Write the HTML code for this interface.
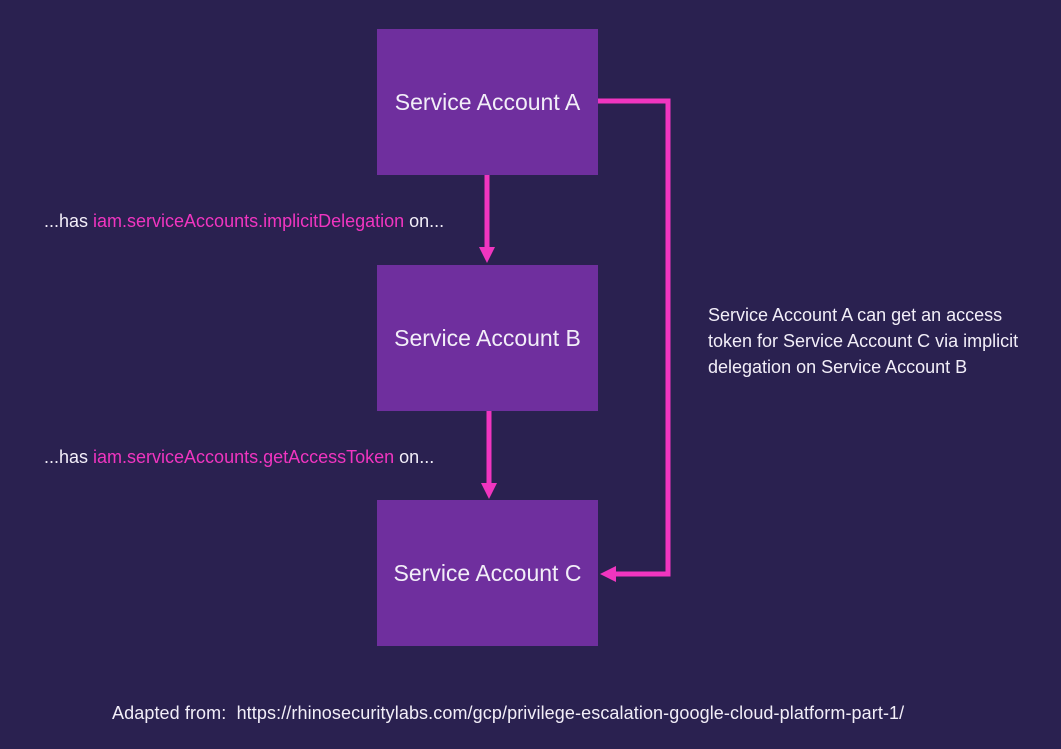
<!DOCTYPE html>
<html><head><style>
body{margin:0;width:1061px;height:749px;background:#2a2150;position:relative;overflow:hidden;font-family:"Liberation Sans",sans-serif;color:#f2eef8}
.box{position:absolute;left:377px;width:221px;height:146px;background:#6f2f9e;display:flex;align-items:center;justify-content:center;font-size:23px}
.t{position:absolute;font-size:18px;white-space:nowrap}
.p{color:#f035c0}
</style></head><body>
<div class="box" style="top:29px">Service Account A</div>
<div class="box" style="top:265px">Service Account B</div>
<div class="box" style="top:500px">Service Account C</div>
<svg width="1061" height="749" style="position:absolute;left:0;top:0">
<g fill="none" stroke="#f035c0" stroke-width="5">
<line x1="487" y1="175" x2="487" y2="248"/>
<line x1="489" y1="411" x2="489" y2="484"/>
<polyline points="598,101 668,101 668,574 615,574"/>
</g>
<g fill="#f035c0">
<polygon points="479,247 495,247 487,263"/>
<polygon points="481,483 497,483 489,499"/>
<polygon points="616,566 616,582 600,574"/>
</g>
</svg>
<div class="t" style="left:44px;top:211px">...has <span class="p">iam.serviceAccounts.implicitDelegation</span> on...</div>
<div class="t" style="left:44px;top:447px">...has <span class="p">iam.serviceAccounts.getAccessToken</span> on...</div>
<div class="t" style="left:708px;top:302px;line-height:26px">Service Account A can get an access<br>token for Service Account C via implicit<br>delegation on Service Account B</div>
<div class="t" style="left:112px;top:703px;letter-spacing:0.1px">Adapted from:&nbsp; https://rhinosecuritylabs.com/gcp/privilege-escalation-google-cloud-platform-part-1/</div>
</body></html>
